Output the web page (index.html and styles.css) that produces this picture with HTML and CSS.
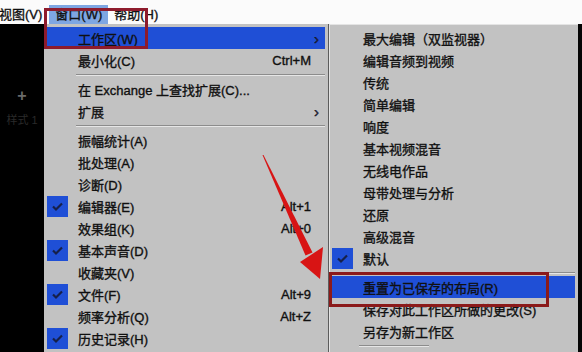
FILE: index.html
```html
<!DOCTYPE html>
<html lang="zh-CN">
<head>
  <meta charset="UTF-8">
  <title>窗口菜单</title>
  <link rel="stylesheet" href="styles.css">
</head>
<body>
  <div class="screen">
    <!-- Menu bar -->
    <div class="menubar">
      <span class="bar-item first">视图(V)</span>
      <span class="bar-item active">窗口(W)</span>
      <span class="bar-item">帮助(H)</span>
    </div>

    <div class="workspace">
      <!-- Dark panel behind the menu -->
      <div class="side-panel">
        <span class="plus">+</span>
        <span class="faint">样式 1</span>
      </div>

      <!-- Window menu -->
      <div class="menu main-menu">
        <div class="item hot"><span class="check"></span><span class="label">工作区(W)</span><span class="arrow">›</span></div>
        <div class="item"><span class="check"></span><span class="label">最小化(C)</span><span class="key">Ctrl+M</span></div>
        <div class="sep"></div>
        <div class="item"><span class="check"></span><span class="label">在 Exchange 上查找扩展(C)...</span></div>
        <div class="item"><span class="check"></span><span class="label">扩展</span><span class="arrow">›</span></div>
        <div class="sep"></div>
        <div class="item"><span class="check"></span><span class="label">振幅统计(A)</span></div>
        <div class="item"><span class="check"></span><span class="label">批处理(A)</span></div>
        <div class="item"><span class="check"></span><span class="label">诊断(D)</span></div>
        <div class="item"><span class="check on"><svg viewBox="0 0 21 21"><polyline points="6,10.5 9,13.5 15,7.5"/></svg></span><span class="label">编辑器(E)</span><span class="key">Alt+1</span></div>
        <div class="item"><span class="check"></span><span class="label">效果组(K)</span><span class="key">Alt+0</span></div>
        <div class="item"><span class="check on"><svg viewBox="0 0 21 21"><polyline points="6,10.5 9,13.5 15,7.5"/></svg></span><span class="label">基本声音(D)</span></div>
        <div class="item"><span class="check"></span><span class="label">收藏夹(V)</span></div>
        <div class="item"><span class="check on"><svg viewBox="0 0 21 21"><polyline points="6,10.5 9,13.5 15,7.5"/></svg></span><span class="label">文件(F)</span><span class="key">Alt+9</span></div>
        <div class="item"><span class="check"></span><span class="label">频率分析(Q)</span><span class="key">Alt+Z</span></div>
        <div class="item"><span class="check on"><svg viewBox="0 0 21 21"><polyline points="6,10.5 9,13.5 15,7.5"/></svg></span><span class="label">历史记录(H)</span></div>
      </div>

      <!-- Workspace submenu -->
      <div class="menu sub-menu">
        <div class="item"><span class="check"></span><span class="label">最大编辑（双监视器）</span></div>
        <div class="item"><span class="check"></span><span class="label">编辑音频到视频</span></div>
        <div class="item"><span class="check"></span><span class="label">传统</span></div>
        <div class="item"><span class="check"></span><span class="label">简单编辑</span></div>
        <div class="item"><span class="check"></span><span class="label">响度</span></div>
        <div class="item"><span class="check"></span><span class="label">基本视频混音</span></div>
        <div class="item"><span class="check"></span><span class="label">无线电作品</span></div>
        <div class="item"><span class="check"></span><span class="label">母带处理与分析</span></div>
        <div class="item"><span class="check"></span><span class="label">还原</span></div>
        <div class="item"><span class="check"></span><span class="label">高级混音</span></div>
        <div class="item"><span class="check on"><svg viewBox="0 0 21 21"><polyline points="6,10.5 9,13.5 15,7.5"/></svg></span><span class="label">默认</span></div>
        <div class="sep"></div>
        <div class="item hot"><span class="check"></span><span class="label">重置为已保存的布局(R)</span></div>
        <div class="item"><span class="check"></span><span class="label">保存对此工作区所做的更改(S)</span></div>
        <div class="item"><span class="check"></span><span class="label">另存为新工作区</span></div>
        <div class="sep short"></div>
      </div>

      <div class="edge"></div>
    </div>

    <!-- Annotations drawn over the screenshot -->
    <div class="mark mark-window"></div>
    <div class="mark mark-reset"></div>
    <svg class="pointer" viewBox="0 0 582 352">
      <polygon points="262.5,155 263.5,155 312.5,252.5 305.5,255.5"/>
      <polygon points="300,262 323,247 320,279"/>
    </svg>
  </div>
</body>
</html>
```

FILE: styles.css
```css
/* Page */
body {
  margin: 0;
  background: #000;
  font-family: "Liberation Sans", "Noto Sans CJK SC", sans-serif;
  font-size: 13px;
  color: #101010;
  -webkit-text-stroke: 0.35px #101010;
}

.screen {
  position: relative;
  width: 582px;
  height: 352px;
  overflow: hidden;
}

/* Menu bar */
.menubar {
  display: flex;
  align-items: flex-end;
  height: 24px;
  background: #fbfbfb;
}

.bar-item {
  height: 19px;
  line-height: 19px;
  padding: 0 6px;
  white-space: nowrap;
}

.bar-item.first {
  padding-left: 0;
  margin-left: -1px;
  margin-right: 1px;
}

.bar-item.active {
  background: #7ea6e2;
}

/* Below the bar */
.workspace {
  display: flex;
  height: 328px;
}

.side-panel {
  width: 44px;
  display: flex;
  flex-direction: column;
  align-items: center;
  padding-top: 63px;
  box-sizing: border-box;
  -webkit-text-stroke: 0;
}

.plus {
  color: #6a6a6a;
  font-size: 16px;
  font-weight: bold;
}

.faint {
  color: #2a2a2a;
  font-size: 11px;
  margin-top: 6px;
}

/* Menus */
.menu {
  background: #c2c2c2;
  padding: 3px 3px 0;
  box-sizing: border-box;
}

.main-menu {
  width: 284px;
}

.sub-menu {
  width: 250px;
  border-left: 1px solid #5c5c5c;
  box-shadow: inset 1px 1px 0 #e4e4e4;
}

.item {
  display: flex;
  align-items: center;
  height: 22px;
}

.item.hot {
  background: #1f4fd6;
}

.check {
  width: 21px;
  height: 21px;
  margin-right: 10px;
  flex: none;
}

.check.on {
  background: #1f4fd6;
}

.check svg {
  width: 21px;
  height: 21px;
  display: block;
  fill: none;
  stroke: #16204a;
  stroke-width: 2.2;
}

.label {
  flex: 1;
  white-space: nowrap;
}

.key {
  margin-right: 14px;
}

.arrow {
  margin-right: 6px;
  font-size: 15px;
  line-height: 15px;
  color: #202040;
}

.sep {
  height: 7px;
  padding-top: 3px;
  box-sizing: border-box;
  margin-left: 29px;
}

.sep::after {
  content: "";
  display: block;
  border-top: 1px solid #8c8c8c;
  border-bottom: 1px solid #e6e6e6;
}

.sub-menu .sep {
  margin-left: 0;
}

.sub-menu .sep.short {
  margin-left: 27px;
  width: 70px;
}

.edge {
  width: 4px;
  background: #050505;
}

/* Annotations */
.mark {
  position: absolute;
  border: 3px solid #8e1b2c;
  box-sizing: border-box;
}

.mark-window {
  left: 44px;
  top: 8px;
  width: 104px;
  height: 41px;
}

.mark-reset {
  left: 329px;
  top: 272px;
  width: 220px;
  height: 35px;
  border-color: #8b1a1a;
}

.pointer {
  position: absolute;
  left: 0;
  top: 0;
  width: 582px;
  height: 352px;
  fill: #d81414;
}
```
